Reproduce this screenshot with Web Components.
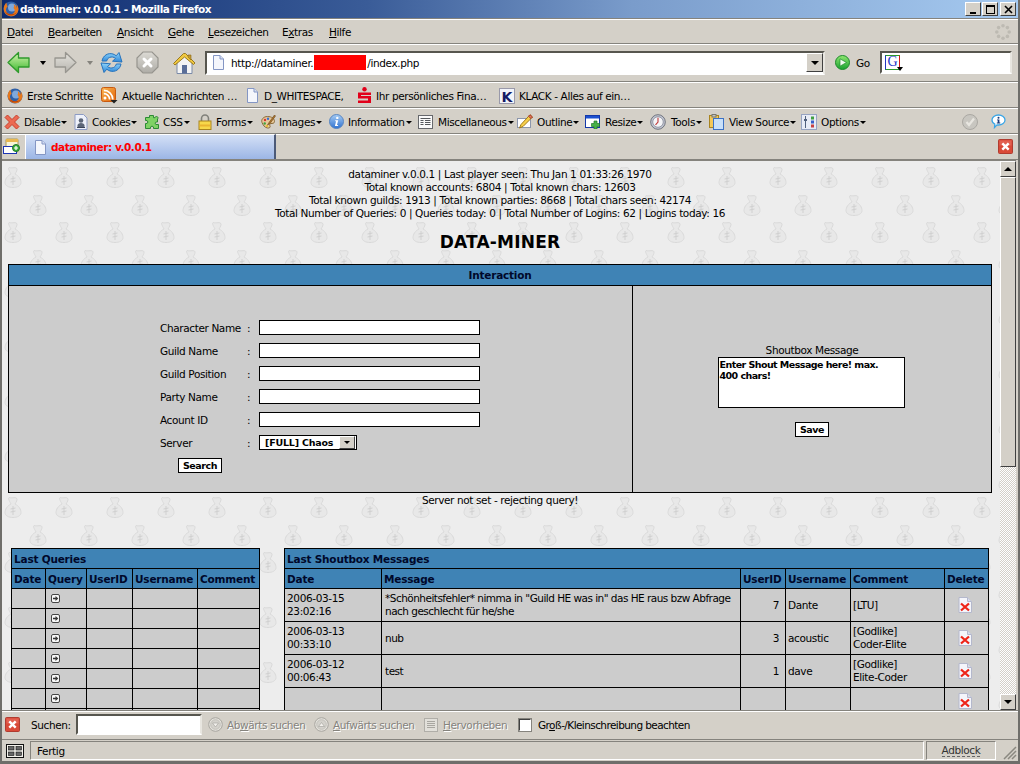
<!DOCTYPE html>
<html lang="de">
<head>
<meta charset="utf-8">
<title>dataminer: v.0.0.1 - Mozilla Firefox</title>
<style>
  html, body { margin: 0; height: 100%; overflow: hidden; background: #d4d0c8; }
  body { font: 10.5px "DejaVu Sans", sans-serif; letter-spacing: -0.38px; color: #000; }
</style>
</head>
<body>
<ff-window>
  <title-bar></title-bar>
  <menu-bar></menu-bar>
  <nav-bar></nav-bar>
  <bookmark-bar></bookmark-bar>
  <dev-bar></dev-bar>
  <tab-bar></tab-bar>
  <page-view>
    <dm-stats></dm-stats>
    <dm-interaction></dm-interaction>
    <dm-tables></dm-tables>
  </page-view>
  <find-bar></find-bar>
  <status-bar></status-bar>
</ff-window>

<script>
const svg = (w, h, body, vb) =>
  `<svg xmlns="http://www.w3.org/2000/svg" width="${w}" height="${h}" viewBox="${vb || `0 0 ${w} ${h}`}" style="display:block;flex:none">${body}</svg>`;

const docPath = `<path d="M1.5.5h6.5l3.5 3.5v10.500h-10z" fill="#f4f6fc" stroke="#8496c4"/><path d="M8 .5v3.5h3.5" fill="#d6def2" stroke="#8496c4"/>`;

const ICONS = {
  firefox: svg(16, 16, `<circle cx="8" cy="8" r="7.5" fill="#2f5fa6"/><circle cx="9" cy="6.5" r="4" fill="#7fa8dc"/><path d="M3.5 1.6C2 3 .7 5.300.7 8a7.400 7.400 0 0 0 14.700 1.100C15.700 6.800 14.800 4.700 13.400 3.400c.4 1.400.2 2.600-.3 3.300C12.900 5 12 3.700 10.600 3c.8 1.700.6 3.200-.2 4.100.9.700 1.400 1.700 1.300 2.900-.2 2-2 3.300-4.200 3.200C5 13.100 3.200 11.400 3 9.300 2.800 7.700 3.500 6.300 4.700 5.400 4 4.700 3.500 3.200 3.500 1.600z" fill="#e8781a"/><path d="M1.500 9.500c.8 3 3.200 5 6.500 5 2.500 0 4.700-1.300 6-3.400-1.700 1.700-3.800 2.400-6 2.200-2.800-.2-5.300-1.700-6.500-3.800z" fill="#b8440c"/>`),
  back: svg(23, 23, `<defs><linearGradient id="g1" x1="0" y1="0" x2="0" y2="1"><stop offset="0" stop-color="#d6f5b0"/><stop offset="1" stop-color="#3bb82f"/></linearGradient></defs><path d="M1 11.500 11.500 1.500v5.500h10.500v9H11.500v5.500z" fill="url(#g1)" stroke="#2f9a2c" stroke-width="1.300" stroke-linejoin="round"/>`),
  forward: svg(23, 23, `<defs><linearGradient id="g2" x1="0" y1="0" x2="0" y2="1"><stop offset="0" stop-color="#e6e4de"/><stop offset="1" stop-color="#b6b4ae"/></linearGradient></defs><path d="M22 11.500 11.500 1.500v5.500H1v9h10.500v5.500z" fill="url(#g2)" stroke="#989690" stroke-width="1.300" stroke-linejoin="round"/>`),
  reload: svg(23, 23, `<defs><linearGradient id="g3" x1="0" y1="0" x2="0" y2="1"><stop offset="0" stop-color="#8fd4fa"/><stop offset="1" stop-color="#2d86d8"/></linearGradient></defs><path d="M2 10C3 4.500 8 1.500 13 3c1.300.4 2.300 1 3.200 1.800L19 1.500l3 9.500-9.500-.8 3-2.800C14 6 11.500 5.500 9.500 6.500 8 7.200 7 8.500 6.700 10z" fill="url(#g3)" stroke="#2673bd"/><path d="M21 13c-1 5.500-6 8.500-11 7-1.300-.4-2.300-1-3.200-1.800L4 21.500l-3-9.500 9.500.8-3 2.800c1.500 1.400 4 1.900 6 .9 1.500-.7 2.500-2 2.800-3.500z" fill="url(#g3)" stroke="#2673bd"/>`),
  stop: svg(23, 23, `<defs><linearGradient id="g4" x1="0" y1="0" x2="0" y2="1"><stop offset="0" stop-color="#dcdad4"/><stop offset="1" stop-color="#aeaca6"/></linearGradient></defs><path d="M7 1h9l6 6v9l-6 6H7l-6-6V7z" fill="url(#g4)" stroke="#96948e" stroke-width="1.200"/><path d="M8 8l7 7M15 8l-7 7" stroke="#fff" stroke-width="3" stroke-linecap="round"/>`),
  home: svg(24, 24, `<path d="M5 11v11.500h15V11L12.500 4z" fill="#f4f4f4" stroke="#7a8aa8"/><path d="M1.500 12.500 11.500 2.500h2l9.500 9.500-1.500 1.500L12.500 6 3 14z" fill="#f0c840" stroke="#9a7a20"/><path d="M16 4h3v5l-3-3z" fill="#c49a30" stroke="#8a6a18" stroke-width=".6"/><rect x="10" y="14" width="5" height="8.500" fill="#5a6e98"/>`),
  doc: svg(13, 15, docPath),
  rss: svg(17, 17, `<defs><linearGradient id="g5" x1="0" y1="0" x2="1" y2="1"><stop offset="0" stop-color="#fbb550"/><stop offset="1" stop-color="#e2650c"/></linearGradient></defs><rect x=".5" y=".5" width="14" height="14" rx="2" fill="url(#g5)" stroke="#c85a10"/><circle cx="4" cy="11" r="1.500" fill="#fff"/><path d="M2.800 6.600a5.800 5.800 0 0 1 5.800 5.800M2.800 3.400a9 9 0 0 1 9 9" fill="none" stroke="#fff" stroke-width="1.700"/><path d="M9.500 13h7l-3.500 3.500z" fill="#222"/>`),
  sparkasse: svg(15, 17, `<circle cx="7.500" cy="2.300" r="2.200" fill="#e2001a"/><path d="M1 5.500h13v2.500H4v1h10v7H1v-2.500h10v-2H1z" fill="#e2001a"/>`),
  klack: svg(16, 16, `<rect x=".5" y=".5" width="15" height="15" fill="#f2f4fa" stroke="#99a"/><text x="2.500" y="13.500" font-family="DejaVu Sans" font-weight="700" font-size="14" fill="#141a66">K</text>`),
  disable: svg(16, 16, `<path d="M1 3.500 3.500 1 8 5.500 12.500 1 15 3.500 10.500 8l4.500 4.500-2.500 2.500L8 10.500 3.500 15 1 12.500 5.500 8z" fill="#ec6a52" stroke="#c8402c"/>`),
  cookies: svg(14, 16, `<path d="M1 .5h8.500l3.500 3.500v11.500H1z" fill="#eef1fa" stroke="#8c9bc4"/><circle cx="7" cy="6.500" r="2.300" fill="#5c6678"/><path d="M3.500 13V11.500c0-1.500 1.500-2.500 3.500-2.500s3.500 1 3.500 2.500V13z" fill="#5c6678"/><path d="M3 13.500h8" stroke="#3a4458"/>`),
  css: svg(16, 16, `<path d="M5.500 1.500h4v2.200h1.500c0 0 0-1.200 1.500-1.200s2 1.700 1 2.500V8H12c-1 0-1 2.500 0 2.500h2.500v4H9.500V13c0-1-3-1-3 0v1.500h-5v-5H3c1 0 1-3 0-3H1.500v-3h4z" fill="#7ed264" stroke="#2c8a34"/>`),
  lock: svg(14, 16, `<path d="M3.500 7V4.500a3.500 3.500 0 0 1 7 0V7" fill="none" stroke="#80807a" stroke-width="1.600"/><rect x="1" y="7" width="12" height="8.500" fill="#f7d84a" stroke="#a88420"/><rect x="1.500" y="10.500" width="11" height="2" fill="#e9b430"/>`),
  images: svg(16, 16, `<path d="M2 8.500C.8 5.500 3.500 2.500 7.500 2.500s7 2 7 5c0 2-2.200 2-3.500 2-1.500 0-1.500 1.500-1 2.500.6 1.200-.5 2.300-2.500 2-2.800-.4-4.600-3-5.500-5.500z" fill="#e6c89a" stroke="#8a6a3a"/><circle cx="5" cy="6" r="1.200" fill="#d83030"/><circle cx="8" cy="4.700" r="1.200" fill="#3a70d0"/><circle cx="4.700" cy="9.500" r="1.200" fill="#40a040"/><circle cx="7" cy="12" r="1.100" fill="#e8c020"/><path d="M14.500 1 9 8.500 7.500 11 10 9.500 15.500 2z" fill="#b07830" stroke="#6a4418" stroke-width=".6"/>`),
  info: svg(15, 15, `<defs><linearGradient id="g6" x1="0" y1="0" x2="0" y2="1"><stop offset="0" stop-color="#a8cdf4"/><stop offset="1" stop-color="#2f72d0"/></linearGradient></defs><circle cx="7.500" cy="7.500" r="7" fill="url(#g6)" stroke="#5a86c0"/><circle cx="8.300" cy="3.900" r="1.200" fill="#fff"/><path d="M6.300 6.300h2.900L8 11h1.200l-.2 1H5.900l1.200-4.800H6.100z" fill="#fff"/>`),
  misc: svg(15, 14, `<rect x=".5" y=".5" width="14" height="13" fill="#fafafa" stroke="#66686c"/><path d="M2.500 3.500h10M2.500 5.500h3M7 5.500h5.500M2.500 7.500h3M7 7.500h5.500M2.500 9.500h3M7 9.500h5.500" stroke="#55585c"/>`),
  outline: svg(16, 16, `<rect x=".5" y="4.500" width="13" height="9" fill="#fff" stroke="#8c96ac"/><path d="M13 .8 15.500 3 6 12.500 2.500 14 4 10.500z" fill="#f7cf4a" stroke="#a07a1a"/><path d="M13 .8 15.500 3l-1.500 1.500L11.500 2.300z" fill="#e87860" stroke="#a04030"/>`),
  resize: svg(16, 14, `<rect x=".5" y=".5" width="14" height="12" fill="#fff" stroke="#1438a8"/><rect x="1" y="1" width="13" height="2.500" fill="#1c50d0"/><path d="M9 6h3v2.500h2.500v3H12V14H9v-2.500H6.500v-3H9z" fill="#48b048" stroke="#1f7a2a" stroke-width=".7"/>`),
  tools: svg(16, 16, `<circle cx="8" cy="8" r="7.300" fill="#c4c8d4" stroke="#70747e"/><circle cx="8" cy="8" r="5.300" fill="#f4f4f6" stroke="#9296a4"/><path d="M8 3.800V8l-2.500 2.800" fill="none" stroke="#c03838" stroke-width="1.100"/>`),
  source: svg(15, 16, `<rect x=".5" y="1.500" width="9" height="12" fill="#f4c858" stroke="#a88420"/><rect x="3" y=".5" width="4" height="2.500" fill="#c4c4c0" stroke="#77776f"/><rect x="4.500" y="4.500" width="10" height="11" fill="#c8e0fa" stroke="#3c72c4"/>`),
  options: svg(16, 16, `<rect x=".5" y=".5" width="15" height="15" fill="#e8ecf6" stroke="#97a4c2"/><path d="M4.500 2v12" stroke="#50607c"/><rect x="3" y="5" width="3" height="2" fill="#50607c"/><rect x="10" y="2.500" width="3" height="3" fill="#40a040"/><rect x="10" y="6.500" width="3" height="3" fill="#3860c8"/><rect x="10" y="10.500" width="3" height="3" fill="#c84040"/>`),
  check: svg(16, 16, `<circle cx="8" cy="8" r="7.500" fill="#c8c6c0" stroke="#aaa8a2"/><path d="M4.500 8 7 11 12 4.500" fill="none" stroke="#e8e6e0" stroke-width="2.200"/>`),
  bubble: svg(15, 15, `<path d="M7.500 1C11.200 1 14 3.200 14 6s-2.800 5-6.500 5c-.5 0-1 0-1.500-.1L3.500 13.500l.3-3.400C2 9.200 1 7.700 1 6c0-2.800 2.800-5 6.500-5z" fill="#fff" stroke="#3ca6e6" stroke-width="1.300"/><circle cx="7.500" cy="3.800" r="1" fill="#1a3a7a"/><path d="M6 5.400h2.400v3.200H9.300v.9H5.800v-.9h.9V6.300H6z" fill="#1a3a7a"/>`),
  newtab: svg(17, 17, `<rect x="3" y="1" width="12" height="13" rx="1" fill="#f8f4d8" stroke="#a89858"/><rect x="3" y="1" width="12" height="3" fill="#e8b850"/><rect x=".5" y="8.500" width="13" height="7" fill="#fff" stroke="#1c34b4"/><circle cx="13" cy="10" r="3.500" fill="#3cae3c" stroke="#1f7a2a"/><path d="M11 10h4M13 8v4" stroke="#fff" stroke-width="1.200"/>`),
  close: svg(15, 15, `<rect x=".5" y=".5" width="14" height="14" rx="1" fill="#d94a38" stroke="#b03c30"/><rect x="1.500" y="1.500" width="12" height="5" fill="#e87060" opacity=".6"/><path d="M4.300 4.300l6.400 6.400M10.700 4.300l-6.400 6.400" stroke="#fff" stroke-width="2.400"/>`),
  findDown: svg(15, 15, `<circle cx="7.500" cy="7.500" r="6.800" fill="#e4e2dc" stroke="#a8a6a0"/><circle cx="7.500" cy="7.500" r="4.800" fill="#d4d2cc" stroke="#c4c2bc"/><path d="M4.500 6h6l-3 4z" fill="#f2f0ec" stroke="#a8a6a0" stroke-width=".7"/>`),
  findUp: svg(15, 15, `<circle cx="7.500" cy="7.500" r="6.800" fill="#e4e2dc" stroke="#a8a6a0"/><circle cx="7.500" cy="7.500" r="4.800" fill="#d4d2cc" stroke="#c4c2bc"/><path d="M4.500 9.500h6l-3-4z" fill="#f2f0ec" stroke="#a8a6a0" stroke-width=".7"/>`),
  mark: svg(14, 14, `<rect x=".5" y=".5" width="13" height="13" fill="#e2e0da" stroke="#b0aea8"/><path d="M3 3.500h8M3 5.500h8M3 7.500h8M3 9.500h8" stroke="#a8a6a0"/>`),
  grid: svg(18, 14, `<rect x=".5" y=".5" width="17" height="13" fill="#f4f2ec" stroke="#111"/><rect x="2.500" y="2.500" width="5.500" height="3.500" fill="#666" stroke="#111" stroke-width=".6"/><rect x="10" y="2.500" width="5.500" height="3.500" fill="#666" stroke="#111" stroke-width=".6"/><rect x="2.500" y="8" width="5.500" height="3.500" fill="#666" stroke="#111" stroke-width=".6"/><rect x="10" y="8" width="5.500" height="3.500" fill="#666" stroke="#111" stroke-width=".6"/>`),
  go: svg(15, 15, `<defs><linearGradient id="g7" x1="0" y1="0" x2="0" y2="1"><stop offset="0" stop-color="#90e870"/><stop offset="1" stop-color="#18a030"/></linearGradient></defs><circle cx="7.500" cy="7.500" r="7" fill="url(#g7)" stroke="#1e8a2c"/><path d="M5 3.800 11.500 7.500 5 11.200z" fill="#f2faf0" stroke="#1e8a2c" stroke-width=".7"/>`),
  throbber: svg(16, 16, `<g fill="#bdbab2"><circle cx="8" cy="1.800" r="1.800"/><circle cx="12.400" cy="3.600" r="1.800"/><circle cx="14.200" cy="8" r="1.800"/><circle cx="12.400" cy="12.400" r="1.800"/><circle cx="8" cy="14.200" r="1.800"/><circle cx="3.600" cy="12.400" r="1.800"/><circle cx="1.800" cy="8" r="1.800"/><circle cx="3.600" cy="3.600" r="1.800"/></g>`),
  plus: svg(9, 9, `<rect x=".5" y=".5" width="8" height="8" rx="1.500" fill="#f6f6f6" stroke="#444"/><path d="M2 3.800h2.500V2l2.800 2.500L4.500 7V5.200H2z" fill="#333"/>`),
  del: svg(14, 16, `<path d="M1 .5h8.500l4 4V15.500H1z" fill="#f4f5fb" stroke="#b4b8cc"/><path d="M9.500.5v4h4" fill="#d8dcec" stroke="#b4b8cc"/><path d="M3 6.500l8 7M11 6.500l-8 7" stroke="#ee2418" stroke-width="2.300"/>`),
};

// each item gets the width up to the next one, so the row stays a plain flex flow
const row = (items, end) => items.map(([x, html], i) => {
  const w = (i + 1 < items.length ? items[i + 1][0] : end) - x;
  const lead = i === 0 ? `margin-left:${x}px;` : "";
  return `<span class="cell" style="${lead}width:${w}px">${html}</span>`;
}).join("");

const BAR_CSS = `
  :host { display: flex; align-items: center; box-sizing: border-box; flex: none; white-space: nowrap;
    border-bottom: 1px solid #85837d; box-shadow: inset 0 1px 0 #fff; }
  .cell { display: flex; align-items: center; flex: none; }
  .arrow { display: inline-block; width: 0; height: 0; margin-left: 1px; margin-top: 1px;
    border: 3px solid transparent; border-top: 3px solid #000; border-bottom: 0; }
  u { text-underline-offset: 1px; }
`;

class FfWindow extends HTMLElement {
  connectedCallback() {
    this.attachShadow({ mode: "open" }).innerHTML = `
      <style>
        :host { display: flex; flex-direction: column; box-sizing: border-box; width: 1020px; height: 764px;
          overflow: hidden; background: #d4d0c8; border-right: 2px solid #6f6e6a; border-left: 2px solid #6f6e6a;
          border-bottom: 3px solid #6f6e6a; }
      </style>
      <slot></slot>`;
  }
}

class TitleBar extends HTMLElement {
  connectedCallback() {
    const btn = (g) => `<span class="btn">${g}</span>`;
    this.attachShadow({ mode: "open" }).innerHTML = `
      <style>
        :host { display: flex; align-items: center; flex: none; height: 18px; margin: 0 -2px; padding: 0 4px 0 3px;
          background: linear-gradient(90deg, #0c2a6e 0, #3a5c98 36%, #7a9ccb 62%, #a6caf0 100%);
          color: #fff; font-weight: 700; letter-spacing: -0.45px; white-space: nowrap; }
        .name { margin-left: 1px; flex: 1; }
        .btn { display: flex; align-items: center; justify-content: center; width: 16px; height: 14px; margin-left: 1px;
          background: #d4d0c8; box-sizing: border-box; border: 1px solid; border-color: #fff #404040 #404040 #fff; }
        .btn:last-child { margin-left: 2px; }
      </style>
      ${ICONS.firefox}<span class="name">dataminer: v.0.0.1 - Mozilla Firefox</span>
      ${btn(svg(9, 9, `<rect x="1" y="7" width="6" height="2" fill="#000"/>`))}
      ${btn(svg(9, 9, `<rect x=".5" y="1" width="8" height="7.500" fill="none" stroke="#000"/><rect y="0" width="9" height="2" fill="#000"/>`))}
      ${btn(svg(9, 9, `<path d="M1 1l7 7M8 1L1 8" stroke="#000" stroke-width="1.600"/>`))}`;
  }
}

class MenuBar extends HTMLElement {
  connectedCallback() {
    const items = [[5, "<u>D</u>atei"], [46, "<u>B</u>earbeiten"], [115, "<u>A</u>nsicht"], [166, "<u>G</u>ehe"],
      [206, "<u>L</u>esezeichen"], [280, "E<u>x</u>tras"], [327, "<u>H</u>ilfe"]];
    this.attachShadow({ mode: "open" }).innerHTML = `
      <style>${BAR_CSS}
        :host { height: 26px; padding-top: 2px; border-top: 1px solid #85837d; }
        .space { flex: 1; }
        .throb { margin-right: 7px; }
      </style>
      ${row(items, 360)}<span class="space"></span><span class="throb">${ICONS.throbber}</span>`;
  }
}

class NavBar extends HTMLElement {
  connectedCallback() {
    this.attachShadow({ mode: "open" }).innerHTML = `
      <style>${BAR_CSS}
        :host { height: 38px; }
        .url, .search { display: flex; align-items: center; box-sizing: border-box; background: #fff; height: 24px;
          border: 2px solid; border-color: #57564f #e8e6e0 #fff #57564f; }
        .url { width: 620px; padding-left: 5px; }
        .url svg { margin-right: 6px; }
        .text { flex: 1; display: flex; align-items: center; }
        .red { display: inline-block; width: 52px; height: 15px; background: #f00; margin: 0 1px; }
        .drop { display: flex; align-items: center; justify-content: center; box-sizing: border-box; width: 17px; height: 19px;
          background: #d4d0c8; border: 1px solid; border-color: #fff #404040 #404040 #fff; }
        .search { width: 132px; height: 23px; padding-left: 3px; }
        .gl { position: relative; display: block; width: 20px; height: 16px; }
        .gbox { box-sizing: border-box; display: flex; align-items: center; justify-content: center; width: 15px; height: 15px;
          border: 1px solid; border-color: #2a9a2a #d01c1c #2a9a2a #2038c0; color: #1c3cc8;
          font: 14px "Liberation Serif", serif; letter-spacing: 0; }
        .gl .tri { position: absolute; left: 12px; top: 12px; border: 3px solid transparent; border-top: 4px solid #000; border-bottom: 0; }
      </style>
      ${row([
        [5, ICONS.back],
        [37, `<span class="arrow" style="border-width:4px 3px 0"></span>`],
        [52, ICONS.forward],
        [84, `<span class="arrow" style="border-width:4px 3px 0;border-top-color:#85837d"></span>`],
        [98, ICONS.reload],
        [134, ICONS.stop],
        [170, ICONS.home],
        [203, `<span class="url">${ICONS.doc}<span class="text">http://dataminer.<span class="red"></span>/index.php</span>
          <span class="drop"><span class="arrow" style="margin:0;border-width:4px 4px 0"></span></span></span>`],
        [833, ICONS.go],
        [854, "Go"],
        [878, `<span class="search"><span class="gl"><span class="gbox">G</span><span class="tri"></span></span></span>`],
      ], 1012)}`;
  }
}

class BookmarkBar extends HTMLElement {
  connectedCallback() {
    this.attachShadow({ mode: "open" }).innerHTML = `
      <style>${BAR_CSS} :host { height: 26px; padding-top: 2px; }</style>
      ${row([
        [5, ICONS.firefox], [25, "Erste Schritte"], [99, ICONS.rss], [120, "Aktuelle Nachrichten …"],
        [244, ICONS.doc], [262, "D_WHITESPACE,"], [355, ICONS.sparkasse], [374, "Ihr persönliches Fina…"],
        [497, ICONS.klack], [517, "KLACK - Alles auf ein…"],
      ], 640)}`;
  }
}

class DevBar extends HTMLElement {
  connectedCallback() {
    const menu = (t) => `${t}<span class="arrow"></span>`;
    this.attachShadow({ mode: "open" }).innerHTML = `
      <style>${BAR_CSS} :host { height: 26px; padding-top: 2px; }</style>
      ${row([
        [2, ICONS.disable], [22, menu("Disable")], [72, ICONS.cookies], [90, menu("Cookies")], [142, ICONS.css], [161, menu("CSS")],
        [196, ICONS.lock], [214, menu("Forms")], [258, ICONS.images], [277, menu("Images")], [327, ICONS.info], [346, menu("Information")],
        [416, ICONS.misc], [436, menu("Miscellaneous")], [515, ICONS.outline], [535, menu("Outline")], [583, ICONS.resize], [603, menu("Resize")],
        [648, ICONS.tools], [669, menu("Tools")], [707, ICONS.source], [727, menu("View Source")], [799, ICONS.options], [819, menu("Options")],
        [960, ICONS.check], [989, ICONS.bubble],
      ], 1006)}`;
  }
}

class TabBar extends HTMLElement {
  connectedCallback() {
    this.attachShadow({ mode: "open" }).innerHTML = `
      <style>
        :host { display: flex; align-items: center; flex: none; height: 26px; box-sizing: border-box; white-space: nowrap;
          padding-left: 1px; box-shadow: inset 0 1px 0 #fff; border-bottom: 1px solid #85837d; }
        .tab { display: flex; align-items: center; box-sizing: border-box; width: 251px; height: 25px; margin-left: 5px; padding-left: 8px;
          align-self: flex-end; background: linear-gradient(#d4e0f6, #9cb6e6); border-top: 1px solid #fff; border-left: 1px solid #fff;
          border-right: 2px solid #4c5a78; color: #f00; font-weight: 700; letter-spacing: -0.45px; }
        .tab svg { margin-right: 4px; }
        .space { flex: 1; }
        .end { margin-right: 5px; }
      </style>
      ${ICONS.newtab}
      <span class="tab">${ICONS.doc}dataminer: v.0.0.1</span>
      <span class="space"></span><span class="end">${ICONS.close}</span>`;
  }
}

const BAG_SHAPE = `<path d="M10 9C6 11 4 14.500 4 17.500 4 21 8 22.500 12 22.500s8-1.500 8-5C20 14.500 18 11 14 9 15 7.500 17 4.500 15.500 3 14 2 10 3.500 8 2.500 6.500 3.500 9 7 10 9z" fill="#e8e8e8" stroke="#d9d9d9"/><path d="M12 11v9M9.500 14l5-1M9.500 17l5-1" stroke="#d0d0d0" fill="none"/>`;
const BAG = encodeURIComponent(`<svg xmlns="http://www.w3.org/2000/svg" width="51" height="55">
  ${BAG_SHAPE}<g transform="translate(25 28)">${BAG_SHAPE}</g></svg>`);

class PageView extends HTMLElement {
  connectedCallback() {
    this.attachShadow({ mode: "open" }).innerHTML = `
      <style>
        :host { display: flex; flex: 1; min-height: 0; overflow: hidden; }
        .page { flex: 1; min-width: 0; overflow: hidden; box-sizing: border-box; padding: 7px 0 0 6px; border-top: 1px solid #85837d;
          background: #ededed url("data:image/svg+xml,${BAG}") -1px 4px; }
        .bar { flex: none; width: 16px; margin-right: 2px; display: flex; flex-direction: column; border-top: 1px solid #85837d;
          background: repeating-conic-gradient(#fff 0 25%, #d4d0c8 0 50%) 0 0 / 2px 2px; }
        .b { flex: none; box-sizing: border-box; display: flex; align-items: center; justify-content: center; background: #d4d0c8;
          border: 1px solid; border-color: #fff #404040 #404040 #fff; }
        .btn { height: 16px; }
        .thumb { height: 290px; }
        .fill { flex: 1; }
        .up { border: 4px solid transparent; border-bottom: 4px solid #000; border-top: 0; }
        .dn { border: 4px solid transparent; border-top: 4px solid #000; border-bottom: 0; }
      </style>
      <div class="page"><slot></slot></div>
      <div class="bar">
        <div class="b btn"><span class="up"></span></div>
        <div class="b thumb"></div>
        <div class="fill"></div>
        <div class="b btn"><span class="dn"></span></div>
      </div>`;
  }
}

class DmStats extends HTMLElement {
  connectedCallback() {
    this.attachShadow({ mode: "open" }).innerHTML = `
      <style>
        :host { display: block; width: 984px; text-align: center; line-height: 13px; white-space: nowrap; }
        h1 { margin: 12px 0 12px; font-size: 17px; line-height: 20px; letter-spacing: 0.2px; }
      </style>
      <div>dataminer v.0.0.1 | Last player seen: Thu Jan 1 01:33:26 1970</div>
      <div>Total known accounts: 6804 | Total known chars: 12603</div>
      <div>Total known guilds: 1913 | Total known parties: 8668 | Total chars seen: 42174</div>
      <div>Total Number of Queries: 0 | Queries today: 0 | Total Number of Logins: 62 | Logins today: 16</div>
      <h1>DATA-MINER</h1>`;
  }
}

const FIELD_CSS = `
  button { display: block; box-sizing: border-box; height: 15px; padding: 0; background: #fff; border: 1px solid #000;
    font: 700 9.5px "DejaVu Sans", sans-serif; letter-spacing: -0.45px; color: #000; }
`;

class DmInteraction extends HTMLElement {
  connectedCallback() {
    const field = (label, inner) => `<span class="l">${label}</span><span class="l">:</span>${inner}`;
    const input = `<input type="text">`;
    this.attachShadow({ mode: "open" }).innerHTML = `
      <style>${FIELD_CSS}
        :host { display: block; width: 984px; }
        table { border-collapse: collapse; table-layout: fixed; width: 984px; }
        td, th { border: 1px solid #000; padding: 0; background: #ccc; vertical-align: top; }
        th { height: 20px; background: #3f83b5; color: #00082a; font-size: 10.5px; letter-spacing: -0.2px; text-align: center; vertical-align: middle; }
        td { height: 206px; }
        form { display: grid; grid-template-columns: 87px 12px 221px; grid-auto-rows: 23px; align-items: start; padding: 34px 0 0 151px; line-height: 15px; }
        .l { padding-top: 1px; }
        input { display: block; box-sizing: border-box; width: 221px; height: 15px; margin: 0; padding: 0; background: #fff; border: 1px solid #000; }
        .select { display: flex; align-items: center; box-sizing: border-box; width: 98px; height: 15px; padding-left: 5px; background: #fff;
          border: 1px solid #000; font-size: 9.5px; font-weight: 700; letter-spacing: -0.2px; white-space: nowrap; }
        .select span:first-child { flex: 1; }
        .sbtn { display: flex; align-items: center; justify-content: center; box-sizing: border-box; width: 16px; height: 13px; margin-right: 1px;
          background: #d4d0c8; border: 1px solid; border-color: #fff #404040 #404040 #fff; }
        .sbtn i { border: 3px solid transparent; border-top: 3px solid #000; border-bottom: 0; }
        form button { grid-column: 1 / -1; width: 44px; margin-left: 18px; }
        .shout { display: flex; flex-direction: column; align-items: center; padding-top: 57px; }
        .shout span { line-height: 14px; padding-top: 1px; margin-top: -1px; }
        textarea { display: block; box-sizing: border-box; width: 187px; height: 51px; margin: 0 0 0 -2px; padding: 1px 0 0 1px; background: #fff; border: 1px solid #000;
          resize: none; overflow: hidden; font: 700 9.5px/11px "DejaVu Sans", sans-serif; letter-spacing: -0.55px; color: #000; }
        .shout button { width: 34px; margin-top: 14px; }
        .msg { text-align: center; line-height: 14px; margin-bottom: 41px; }
      </style>
      <table>
        <colgroup><col style="width:624px"><col style="width:359px"></colgroup>
        <tr><th colspan="2">Interaction</th></tr>
        <tr>
          <td><form onsubmit="return false">
            ${field("Character Name", input)}
            ${field("Guild Name", input)}
            ${field("Guild Position", input)}
            ${field("Party Name", input)}
            ${field("Acount ID", input)}
            ${field("Server", `<span class="select"><span>[FULL] Chaos</span><span class="sbtn"><i></i></span></span>`)}
            <button type="button">Search</button>
          </form></td>
          <td><div class="shout">
            <span>Shoutbox Message</span>
            <textarea>Enter Shout Message here! max.&#10;400 chars!</textarea>
            <button type="button">Save</button>
          </div></td>
        </tr>
      </table>
      <div class="msg">Server not set - rejecting query!</div>`;
  }
}

class DmTables extends HTMLElement {
  connectedCallback() {
    const head = (title, cols) => `<tr><th class="t" colspan="${cols.length}">${title}</th></tr>
      <tr>${cols.map((c) => `<th>${c}</th>`).join("")}</tr>`;
    const cols = (w) => `<colgroup>${w.map((x) => `<col style="width:${x}px">`).join("")}</colgroup>`;
    const queries = Array.from({ length: 7 }, () =>
      `<tr class="q"><td></td><td><span class="plus">${ICONS.plus}</span></td><td></td><td></td><td></td></tr>`).join("");
    const shouts = [
      ["2006-03-15<br>23:02:16", `*Schönheitsfehler* nimma in "Guild HE was in" das HE raus bzw Abfrage<br>nach geschlecht für he/she`, "7", "Dante", "[LTU]"],
      ["2006-03-13<br>00:33:10", "nub", "3", "acoustic", "[Godlike]<br>Coder-Elite"],
      ["2006-03-12<br>00:06:43", "test", "1", "dave", "[Godlike]<br>Elite-Coder"],
      ["", "", "", "", "", "e"],
    ].map(([d, m, id, u, c, e]) => `<tr class="s${e ? " e" : ""}"><td>${d}</td><td class="m">${m}</td><td class="r">${id}</td><td>${u}</td><td>${c}</td>
      <td><span class="del">${ICONS.del}</span></td></tr>`).join("");
    this.attachShadow({ mode: "open" }).innerHTML = `
      <style>
        :host { display: flex; gap: 24px; padding-left: 3px; align-items: flex-start; }
        table { border-collapse: collapse; table-layout: fixed; flex: none; }
        td, th { border: 1px solid #000; padding: 0 2px; background: #ccc; line-height: 13px; overflow: hidden; }
        th { height: 20px; box-sizing: border-box; padding-top: 2px; background: #3f83b5; color: #00082a; letter-spacing: -0.2px; text-align: left; white-space: nowrap; }
        .q td { height: 19px; }
        .s td { height: 32px; }
        .s.e td { height: 26px; }
        .m { white-space: nowrap; letter-spacing: -0.52px; padding-left: 3px; }
        .plus { display: flex; margin-left: 3px; }
        .del { display: flex; justify-content: center; margin-right: 4px; }
        .r { text-align: right; padding-right: 6px; }
      </style>
      <table style="width:249px">${cols([34, 41, 46, 65, 62])}<tbody>${head("Last Queries", ["Date", "Query", "UserID", "Username", "Comment"])}${queries}</tbody></table>
      <table style="width:704px">${cols([97, 359, 45, 65, 94, 44])}<tbody>${head("Last Shoutbox Messages", ["Date", "Message", "UserID", "Username", "Comment", "Delete"])}${shouts}</tbody></table>`;
  }
}

class FindBar extends HTMLElement {
  connectedCallback() {
    const dim = (t) => `<span class="dim">${t}</span>`;
    this.attachShadow({ mode: "open" }).innerHTML = `
      <style>${BAR_CSS}
        :host { height: 30px; border-top: 1px solid #85837d; padding-bottom: 1px; }
        .dim { color: #85837d; text-shadow: 1px 1px 0 #fff; }
        .tight { letter-spacing: -0.58px; }
        input { box-sizing: border-box; width: 126px; height: 21px; margin: 0; padding: 0; background: #fff;
          border: 2px solid; border-color: #57564f #e8e6e0 #fff #57564f; }
        .box { display: block; box-sizing: border-box; width: 12px; height: 12px; background: #fff;
          border: 1px solid; border-color: #404040 #fff #fff #404040; outline: 1px solid #85837d; }
      </style>
      ${row([
        [3, ICONS.close], [29, "Suchen:"], [74, `<input type="text">`],
        [206, ICONS.findDown], [225, dim("Ab<u>w</u>ärts suchen")],
        [312, ICONS.findUp], [331, dim("<u>A</u>ufwärts suchen")],
        [422, ICONS.mark], [441, dim("<u>H</u>ervorheben")],
        [517, `<span class="box"></span>`], [536, `<span class="tight">Gr<u>o</u>ß-/Kleinschreibung beachten</span>`],
      ], 720)}`;
  }
}

class StatusBar extends HTMLElement {
  connectedCallback() {
    this.attachShadow({ mode: "open" }).innerHTML = `
      <style>
        :host { display: flex; align-items: stretch; flex: none; height: 21px; box-sizing: border-box; white-space: nowrap; padding: 1px 0 1px 4px; }
        .p { display: flex; align-items: center; box-sizing: border-box; border: 1px solid; border-color: #85837d #fff #fff #85837d; }
        .grid { align-self: center; margin-right: 6px; }
        .main { width: 894px; padding-left: 6px; }
        .ab { width: 70px; margin-left: 2px; justify-content: center; }
        .ab span { border-bottom: 1px dashed #666; line-height: 11px; color: #333; }
        .grip { width: 14px; margin-left: 7px; align-self: flex-end; }
      </style>
      <span class="grid">${ICONS.grid}</span>
      <span class="p main">Fertig</span>
      <span class="p ab"><span>Adblock</span></span>
      <span class="grip">${svg(14, 14, `<path d="M13 1 1 13M13 5 5 13M13 9 9 13" stroke="#8a8880" stroke-width="1.500"/>`)}</span>`;
  }
}

customElements.define("ff-window", FfWindow);
customElements.define("title-bar", TitleBar);
customElements.define("menu-bar", MenuBar);
customElements.define("nav-bar", NavBar);
customElements.define("bookmark-bar", BookmarkBar);
customElements.define("dev-bar", DevBar);
customElements.define("tab-bar", TabBar);
customElements.define("page-view", PageView);
customElements.define("dm-stats", DmStats);
customElements.define("dm-interaction", DmInteraction);
customElements.define("dm-tables", DmTables);
customElements.define("find-bar", FindBar);
customElements.define("status-bar", StatusBar);
</script>
</body>
</html>
